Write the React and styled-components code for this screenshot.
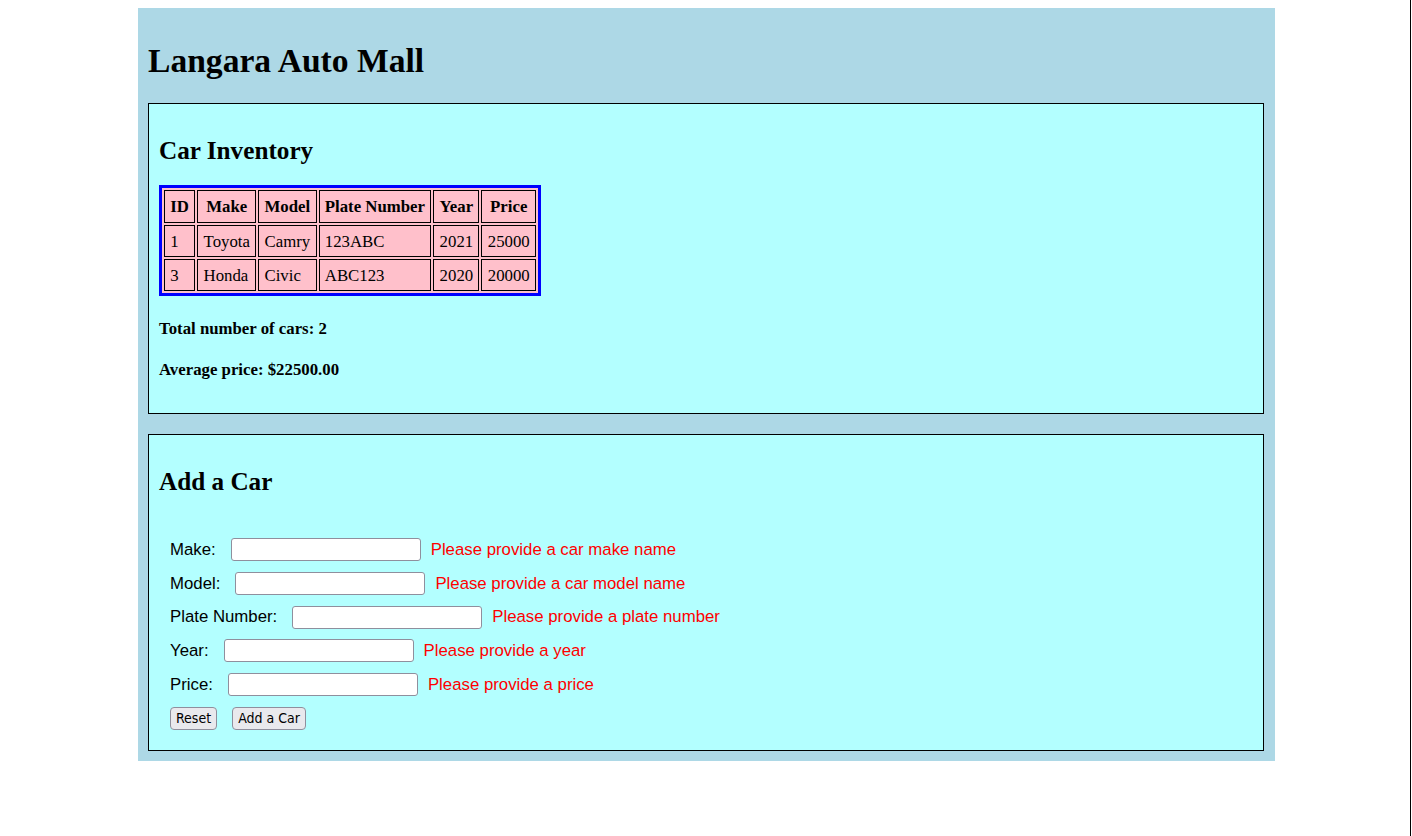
import React from "react";
import styled, { createGlobalStyle } from "styled-components";

const GlobalStyle = createGlobalStyle`
  html, body { background: #ffffff; }
  body {
    margin: 8px;
    font-family: "Liberation Serif", "Times New Roman", serif;
    font-size: 16.8px;
    color: #000;
  }
`;

const EdgeLine = styled.div`
  position: fixed;
  top: 0;
  right: 1px;
  width: 1px;
  height: 100vh;
  background: #000;
`;

const Page = styled.div`
  width: 1137px;
  box-sizing: border-box;
  margin: 0 auto;
  padding: 11px 10.5px 10px;
  background: #add8e6;
  display: flow-root;
`;

const Title = styled.h1`
  font-size: 33.6px;
  font-weight: bold;
  margin: 22.5px 0;
  line-height: 1.15;
`;

const Section = styled.section`
  border: 1px solid #000;
  background: #b3ffff;
  padding: 0 10px;
  margin-top: ${(p) => (p.$first ? "23px" : "20px")};
  display: flow-root;
`;

const SectionTitle = styled.h2`
  font-size: 25.2px;
  font-weight: bold;
  margin: 32.9px 0 19.4px;
  line-height: 1.15;
`;

const Table = styled.table`
  border: 3px solid #0000ff;
  border-spacing: 2px;
  background: #ffc0cb;
  font-size: 16.8px;
  line-height: 1.15;
`;

const Th = styled.th`
  border: 1px solid #000;
  background: #ffc0cb;
  padding: 6px 5.3px 5px;
  font-weight: bold;
  text-align: center;
`;

const Td = styled.td`
  border: 1px solid #000;
  background: #ffc0cb;
  padding: 6px 5.3px 5px;
  text-align: left;
`;

const Stat = styled.h4`
  font-size: 16.8px;
  font-weight: bold;
  margin: 22.3px 0;
  line-height: 1.15;
  &:last-child { margin-bottom: 33.8px; }
`;

const Form = styled.form`
  display: flex;
  flex-direction: column;
  gap: 10.1px;
  padding: 21.5px 11px 20px;
  font-family: "Liberation Sans", Arial, sans-serif;
  font-size: 16.8px;
`;

const Row = styled.div`
  display: flex;
  align-items: center;
  height: 23.6px;
`;

const Label = styled.label`
  margin-right: 15px;
  white-space: nowrap;
`;

const Input = styled.input`
  box-sizing: border-box;
  width: 190px;
  height: 23px;
  border: 1px solid #8f8f9d;
  border-radius: 3px;
  background: #fff;
  padding: 1px 4px;
  margin: 0;
  font-size: 14px;
`;

const ErrorText = styled.span`
  color: #ff0000;
  margin-left: 10px;
  white-space: nowrap;
`;

const Button = styled.button`
  box-sizing: border-box;
  height: 23px;
  padding: 0 5px;
  margin: 0 15px 0 0;
  border: 1px solid #8f8f9d;
  border-radius: 4px;
  background: #e9e9ed;
  color: #000;
  font-family: "DejaVu Sans Condensed", "DejaVu Sans", sans-serif;
  font-size: 14px;
  line-height: 21px;
`;

const cars = [
  { id: 1, make: "Toyota", model: "Camry", plate: "123ABC", year: 2021, price: 25000 },
  { id: 3, make: "Honda", model: "Civic", plate: "ABC123", year: 2020, price: 20000 },
];

const fields = [
  { label: "Make:", error: "Please provide a car make name" },
  { label: "Model:", error: "Please provide a car model name" },
  { label: "Plate Number:", error: "Please provide a plate number" },
  { label: "Year:", error: "Please provide a year" },
  { label: "Price:", error: "Please provide a price" },
];

export default function App() {
  const avg = cars.reduce((s, c) => s + c.price, 0) / cars.length;
  return (
    <>
      <GlobalStyle />
      <Page>
        <Title>Langara Auto Mall</Title>
        <Section $first>
          <SectionTitle>Car Inventory</SectionTitle>
          <Table>
            <thead>
              <tr>
                <Th>ID</Th>
                <Th>Make</Th>
                <Th>Model</Th>
                <Th>Plate Number</Th>
                <Th>Year</Th>
                <Th>Price</Th>
              </tr>
            </thead>
            <tbody>
              {cars.map((c) => (
                <tr key={c.id}>
                  <Td>{c.id}</Td>
                  <Td>{c.make}</Td>
                  <Td>{c.model}</Td>
                  <Td>{c.plate}</Td>
                  <Td>{c.year}</Td>
                  <Td>{c.price}</Td>
                </tr>
              ))}
            </tbody>
          </Table>
          <Stat>Total number of cars: {cars.length}</Stat>
          <Stat>Average price: ${avg.toFixed(2)}</Stat>
        </Section>
        <Section>
          <SectionTitle>Add a Car</SectionTitle>
          <Form onSubmit={(e) => e.preventDefault()}>
            {fields.map((f) => (
              <Row key={f.label}>
                <Label>{f.label}</Label>
                <Input type="text" />
                <ErrorText>{f.error}</ErrorText>
              </Row>
            ))}
            <Row>
              <Button type="reset">Reset</Button>
              <Button type="submit">Add a Car</Button>
            </Row>
          </Form>
        </Section>
      </Page>
      <EdgeLine />
    </>
  );
}
